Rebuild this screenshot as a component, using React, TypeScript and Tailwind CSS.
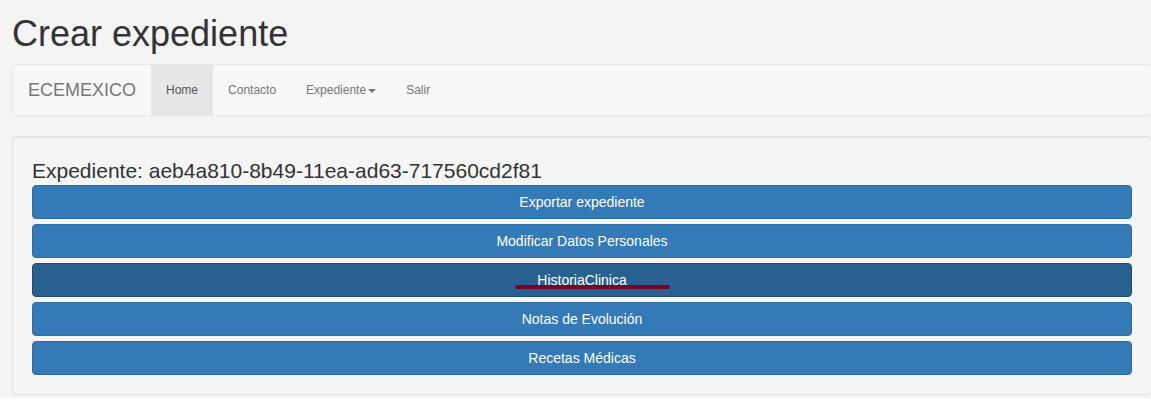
import React from 'react';

const acciones = [
  'Exportar expediente',
  'Modificar Datos Personales',
  'HistoriaClinica',
  'Notas de Evolución',
  'Recetas Médicas',
];

export default function App() {
  const navItems = ['Home', 'Contacto', 'Expediente', 'Salir'];

  return (
    <div className="min-h-[398px] bg-[#f4f4f4] pl-[12px] font-['Liberation_Sans',Arial,sans-serif] text-[#333]">
      <div className="w-[1140px]">
        <h1 className="pt-[14px] text-[36px] leading-[40px] text-[#333]">Crear expediente</h1>

        {/* Navbar */}
        <nav className="mt-[10px] flex h-[52px] items-stretch rounded-[4px] border border-[#e7e7e7] bg-[#f8f8f8]">
          <a className="flex items-center px-[15px] text-[18px] text-[#777]">ECEMEXICO</a>
          <ul className="flex items-stretch text-[12px]">
            {navItems.map((item) => (
              <li
                key={item}
                className={`flex items-center px-[15px] ${
                  item === 'Home' ? 'bg-[#e7e7e7] text-[#555]' : 'text-[#777]'
                }`}
              >
                {item}
                {item === 'Expediente' && (
                  <span className="ml-[2px] mt-[1px] inline-block h-0 w-0 border-x-[4px] border-t-[4px] border-x-transparent border-t-[#777]" />
                )}
              </li>
            ))}
          </ul>
        </nav>

        {/* Well */}
        <div className="mt-[20px] rounded-[4px] border border-[#e3e3e3] bg-[#f5f5f5] p-[19px] shadow-[inset_0_1px_1px_rgba(0,0,0,0.05)]">
          <h3 className="h-[29px] text-[21px] leading-[29px] text-[#333]">
            Expediente: aeb4a810-8b49-11ea-ad63-717560cd2f81
          </h3>
          <div className="flex flex-col gap-[5px]">
            {acciones.map((a) => {
              const activo = a === 'HistoriaClinica';
              return (
                <div
                  key={a}
                  className={`relative flex h-[34px] items-center justify-center rounded-[4px] border text-[14px] text-white ${
                    activo ? 'border-[#204d74] bg-[#286090]' : 'border-[#2e6da4] bg-[#337ab7]'
                  }`}
                >
                  {a}
                  {activo && (
                    <span className="absolute left-[482px] top-[21px] h-[4px] w-[155px] rounded-full bg-[#7a001f]" />
                  )}
                </div>
              );
            })}
          </div>
        </div>
      </div>
    </div>
  );
}
